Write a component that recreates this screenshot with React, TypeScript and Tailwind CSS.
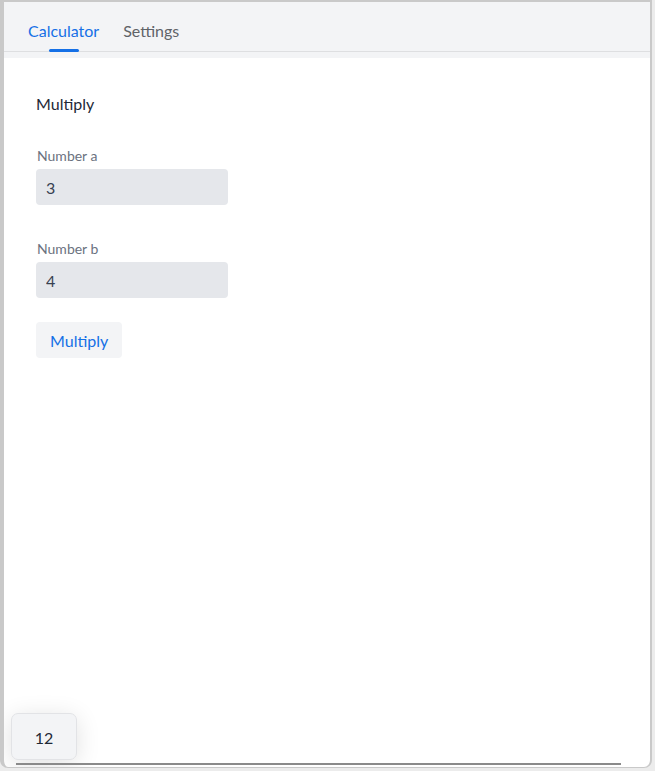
import { useState } from 'react'

const font = { fontFamily: '"Lato", "Liberation Sans", sans-serif' }

export default function App() {
  const [tab, setTab] = useState('calc')
  const [a, setA] = useState('3')
  const [b, setB] = useState('4')

  return (
    <div className="w-[655px] h-[771px] bg-[#ececec] overflow-hidden" style={font}>
      <div className="relative w-[652px] h-[768px] bg-white border-l-[4px] border-t-2 border-r-2 border-b border-[#c9c9c9] rounded-b-[8px] overflow-hidden">
        {/* tabs */}
        <div className="bg-[#f3f4f6] pb-[6px]">
          <nav className="flex h-[50px] items-end gap-6 px-6 border-b border-[#dedfe1]">
            <button
              onClick={() => setTab('calc')}
              className={`relative h-full flex items-center text-[16px] ${tab === 'calc' ? 'text-[#1570e6]' : 'text-[#5f6368]'}`}
            >
              <span className="pt-[9px]">Calculator</span>
              {tab === 'calc' && <span className="absolute bottom-[-1px] left-1/2 -translate-x-1/2 w-[30px] h-[3px] rounded-full bg-[#1570e6]"></span>}
            </button>
            <button
              onClick={() => setTab('settings')}
              className={`relative h-full flex items-center text-[16px] ${tab === 'settings' ? 'text-[#1570e6]' : 'text-[#5f6368]'}`}
            >
              <span className="pt-[9px]">Settings</span>
            </button>
          </nav>
        </div>

        {/* content */}
        <main className="px-8 pt-[36px]">
          <h1 className="text-[16px] text-[#1f2937] leading-5">Multiply</h1>

          <div className="mt-[33px] flex flex-col w-[192px]">
            <label className="text-[14px] text-[#6b7280] leading-[18px] pl-[1px]">Number a</label>
            <input value={a} onChange={e => setA(e.target.value)} className="mt-[4px] h-9 rounded-[4px] bg-[#e5e7eb] px-[10px] text-[16px] text-[#374151] outline-none" />
          </div>

          <div className="mt-[35px] flex flex-col w-[192px]">
            <label className="text-[14px] text-[#6b7280] leading-[18px] pl-[1px]">Number b</label>
            <input value={b} onChange={e => setB(e.target.value)} className="mt-[4px] h-9 rounded-[4px] bg-[#e5e7eb] px-[10px] text-[16px] text-[#374151] outline-none" />
          </div>

          <button className="mt-6 h-9 px-[14px] pt-[2px] rounded-[4px] bg-[#f3f4f6] text-[16px] text-[#1570e6]">Multiply</button>
        </main>

        {/* result toast */}
        <div className="absolute left-[7px] top-[711px] w-[66px] h-[47px] pt-[2px] rounded-[7px] bg-[#f3f4f6] border border-[#e2e3e6] shadow-[0_4px_24px_rgba(0,0,0,0.12)] flex items-center justify-center text-[16px] text-[#1f2937]">
          {(Number(a) * Number(b)) || 12}
        </div>

        {/* scrollbar */}
        <div className="absolute left-[12px] top-[761px] w-[605px] h-[2px] bg-[#8a8a8a]"></div>
      </div>
    </div>
  )
}
